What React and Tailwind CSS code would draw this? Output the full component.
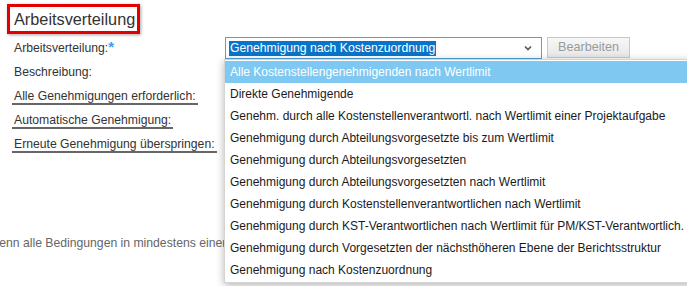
import React from "react";

const items = [
  "Alle Kostenstellengenehmigenden nach Wertlimit",
  "Direkte Genehmigende",
  "Genehm. durch alle Kostenstellenverantwortl. nach Wertlimit einer Projektaufgabe",
  "Genehmigung durch Abteilungsvorgesetzte bis zum Wertlimit",
  "Genehmigung durch Abteilungsvorgesetzten",
  "Genehmigung durch Abteilungsvorgesetzten nach Wertlimit",
  "Genehmigung durch Kostenstellenverantwortlichen nach Wertlimit",
  "Genehmigung durch KST-Verantwortlichen nach Wertlimit für PM/KST-Verantwortlich.",
  "Genehmigung durch Vorgesetzten der nächsthöheren Ebene der Berichtsstruktur",
  "Genehmigung nach Kostenzuordnung",
];

export default function App() {
  return (
    <div
      className="relative w-[687px] h-[286px] overflow-hidden bg-white text-[12.2px] text-[#333]"
      style={{ fontFamily: '"Liberation Sans", Arial, sans-serif' }}
    >
      <div className="pt-[4px] pl-[7px]">
        <div className="inline-block border-[3px] border-[#e50000] shadow-[1px_1px_3px_rgba(0,0,0,0.35)] pl-[4px] pr-[2px] h-[30px] leading-[25px] text-[16.3px] text-[#333]">
          Arbeitsverteilung
        </div>
      </div>

      <div className="mt-[1px]">
        <div className="flex h-[24px]">
          <div className="w-[225px] pl-[14px] pt-[4px] leading-[16px]">
            Arbeitsverteilung:<span className="text-[#3aa0e8] text-[15px] font-bold">*</span>
          </div>
          <div className="mt-[2px] w-[317px] h-[22px] border border-[#4fa3dc] flex items-center pl-[3px] pr-[9px]">
            <span className="bg-[#0a74c9] text-white leading-[15px] px-[1px]">
              Genehmigung nach Kostenzuordnung
            </span>
            <svg className="ml-auto" width="8" height="6" viewBox="0 0 8 6">
              <path d="M1 1.5 L4 4.5 L7 1.5" stroke="#555" strokeWidth="1.6" fill="none" />
            </svg>
          </div>
          <div className="ml-[5px] mt-[2px] w-[83px] h-[21px] border border-[#c8c8c8] bg-gradient-to-b from-[#f7f7f7] to-[#e8e8e8] text-[#9a9a9a] flex items-center justify-center leading-[15px] text-[12.6px]">
            Bearbeiten
          </div>
        </div>
        <div className="flex h-[24px]">
          <div className="pl-[14px] pt-[5px] leading-[16px]">Beschreibung:</div>
        </div>
        <div className="flex h-[24px]">
          <div className="ml-[12px] pl-[2px] pr-[2px] pt-[5px] leading-[16px] border-b-2 border-[#666] h-[22px]">
            Alle Genehmigungen erforderlich:
          </div>
        </div>
        <div className="flex h-[24px]">
          <div className="ml-[12px] pl-[2px] pr-[2px] pt-[5px] leading-[16px] border-b-2 border-[#666] h-[22px]">
            Automatische Genehmigung:
          </div>
        </div>
        <div className="flex h-[24px]">
          <div className="ml-[12px] pl-[2px] pr-[2px] pt-[5px] leading-[16px] border-b-2 border-[#666] h-[22px]">
            Erneute Genehmigung überspringen:
          </div>
        </div>
      </div>

      <div className="mt-[80px] w-[224px] overflow-hidden">
        <div className="ml-[-12px] whitespace-nowrap leading-[16px] text-[#666]">
          Wenn alle Bedingungen in mindestens einer Gruppe
        </div>
      </div>

      <div className="absolute left-[224px] top-[59px] w-[490px] bg-white border border-[#d4d4d4] shadow-[0_2px_8px_rgba(0,0,0,0.3)] pt-[1px] pb-[1px] text-[12px] text-[#1a1a1a]">
        {items.map((t, i) => (
          <div
            key={t}
            className={
              i === 0
                ? "h-[22px] leading-[22px] pl-[5px] whitespace-nowrap bg-[#7ec8f2] text-white"
                : "h-[22px] leading-[22px] pl-[5px] whitespace-nowrap"
            }
          >
            {t}
          </div>
        ))}
      </div>
    </div>
  );
}
